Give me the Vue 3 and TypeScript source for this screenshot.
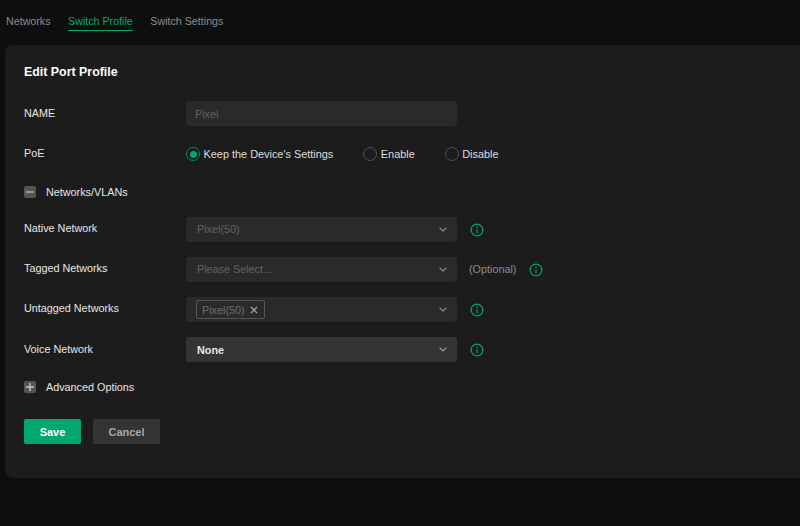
<script setup lang="ts">
const poe = [
  { label: "Keep the Device's Settings", on: true },
  { label: 'Enable', on: false },
  { label: 'Disable', on: false },
]
</script>

<template>
  <div class="page">
    <nav class="tabs">
      <span class="tab">Networks</span>
      <span class="tab active">Switch Profile</span>
      <span class="tab">Switch Settings</span>
    </nav>
    <section class="card">
      <h1 class="title">Edit Port Profile</h1>

      <div class="row name-row">
        <span class="label">NAME</span>
        <div class="field disabled name-field">Pixel</div>
      </div>

      <div class="row poe-row">
        <span class="label">PoE</span>
        <div class="radios">
          <span v-for="r in poe" :key="r.label" class="radio-item">
            <span class="radio" :class="{ on: r.on }"></span>
            <span>{{ r.label }}</span>
          </span>
        </div>
      </div>

      <div class="section nets-head">
        <span class="toggle">
          <svg width="12" height="12" viewBox="0 0 12 12"><path d="M2 6h8" stroke="#b4b4b4" stroke-width="1.4" /></svg>
        </span>
        <span>Networks/VLANs</span>
      </div>

      <div class="row net-row first">
        <span class="label">Native Network</span>
        <div class="field disabled select">
          <span class="val">Pixel(50)</span>
          <svg class="chev" width="8" height="5" viewBox="0 0 8 5"><path d="M.6.7L4 4l3.4-3.3" fill="none" stroke="#8a8a8a" stroke-width="1.2" /></svg>
        </div>
        <svg class="info" width="14" height="14" viewBox="0 0 14 14"><circle cx="7" cy="7" r="5.9" fill="none" stroke="#00a870" stroke-width="1.2" /><path d="M7 6.2v4M7 3.8v1.3" stroke="#00a870" stroke-width="1.2" /></svg>
      </div>

      <div class="row net-row">
        <span class="label">Tagged Networks</span>
        <div class="field disabled select">
          <span class="val">Please Select...</span>
          <svg class="chev" width="8" height="5" viewBox="0 0 8 5"><path d="M.6.7L4 4l3.4-3.3" fill="none" stroke="#8a8a8a" stroke-width="1.2" /></svg>
        </div>
        <span class="optional">(Optional)</span>
        <svg class="info" width="14" height="14" viewBox="0 0 14 14"><circle cx="7" cy="7" r="5.9" fill="none" stroke="#00a870" stroke-width="1.2" /><path d="M7 6.2v4M7 3.8v1.3" stroke="#00a870" stroke-width="1.2" /></svg>
      </div>

      <div class="row net-row">
        <span class="label">Untagged Networks</span>
        <div class="field disabled select tagged">
          <span class="tag">Pixel(50)
            <svg width="8" height="8" viewBox="0 0 8 8"><path d="M1 1l6 6M7 1L1 7" stroke="#b0b0b0" stroke-width="1.1" /></svg>
          </span>
          <svg class="chev" width="8" height="5" viewBox="0 0 8 5"><path d="M.6.7L4 4l3.4-3.3" fill="none" stroke="#8a8a8a" stroke-width="1.2" /></svg>
        </div>
        <svg class="info" width="14" height="14" viewBox="0 0 14 14"><circle cx="7" cy="7" r="5.9" fill="none" stroke="#00a870" stroke-width="1.2" /><path d="M7 6.2v4M7 3.8v1.3" stroke="#00a870" stroke-width="1.2" /></svg>
      </div>

      <div class="row net-row voice">
        <span class="label">Voice Network</span>
        <div class="field enabled select">
          <span>None</span>
          <svg class="chev" width="8" height="5" viewBox="0 0 8 5"><path d="M.6.7L4 4l3.4-3.3" fill="none" stroke="#9a9a9a" stroke-width="1.2" /></svg>
        </div>
        <svg class="info" width="14" height="14" viewBox="0 0 14 14"><circle cx="7" cy="7" r="5.9" fill="none" stroke="#00a870" stroke-width="1.2" /><path d="M7 6.2v4M7 3.8v1.3" stroke="#00a870" stroke-width="1.2" /></svg>
      </div>

      <div class="section adv-head">
        <span class="toggle">
          <svg width="12" height="12" viewBox="0 0 12 12"><path d="M2 6h8M6 2v8" stroke="#c4c4c4" stroke-width="1.4" /></svg>
        </span>
        <span>Advanced Options</span>
      </div>

      <div class="actions">
        <button class="btn save" type="button">Save</button>
        <button class="btn cancel" type="button">Cancel</button>
      </div>
    </section>
  </div>
</template>

<style>
html, body { margin: 0; background: #0e0e0e; }
</style>

<style scoped>
.page {
  width: 800px;
  height: 526px;
  overflow: hidden;
  background: #0e0e0e;
  font-family: "Liberation Sans", Arial, sans-serif;
  font-size: 10.8px;
  color: #e6e6e6;
  box-sizing: border-box;
  padding-left: 5px;
}
.tabs {
  display: flex;
  gap: 17.5px;
  height: 45px;
  padding: 14px 0 0 1px;
  box-sizing: border-box;
  font-size: 10.7px;
}
.tab {
  color: #8c8c8c;
  height: 16px;
  line-height: 14px;
}
.tab.active {
  color: #00a870;
  border-bottom: 1px solid #00a870;
}
.card {
  width: 830px;
  height: 433px;
  background: #1c1c1c;
  border-radius: 8px;
  box-sizing: border-box;
  padding: 19px 0 0 19px;
}
.title {
  margin: 0;
  font-size: 12.4px;
  font-weight: 700;
  line-height: 16px;
  color: #fff;
}
.row {
  display: flex;
  align-items: center;
}
.label {
  width: 162px;
  flex: none;
  position: relative;
  top: -1px;
  color: #e6e6e6;
}
.net-row .label { top: -2px; }
.net-row.voice .label { top: -1px; }
.name-row { margin-top: 21px; }
.poe-row { margin-top: 18px; height: 20px; }
.field {
  width: 271px;
  height: 25px;
  flex: none;
  box-sizing: border-box;
  padding: 0 10px 0 11px;
  border-radius: 3px;
  display: flex;
  align-items: center;
  justify-content: space-between;
}
.name-field { padding-left: 9px; }
.field.disabled { background: #2a2a2a; color: #626262; }
.field.enabled { background: #343434; color: #e8e8e8; font-weight: 700; }
.val { position: relative; top: -1px; }
.tagged { padding-left: 10px; }
.tag {
  display: inline-flex;
  align-items: center;
  gap: 5px;
  height: 19px;
  padding: 0 6px 0 5px;
  box-sizing: border-box;
  border: 1px solid #565656;
  border-radius: 2px;
  color: #6e6e6e;
}
.radios { display: flex; align-items: center; font-size: 10.9px; }
.radio-item { display: inline-flex; align-items: center; gap: 3.5px; margin-right: 30px; color: #dedede; }
.radio {
  width: 14px;
  height: 14px;
  border: 1px solid #505050;
  border-radius: 50%;
  box-sizing: border-box;
  display: inline-block;
  position: relative;
}
.radio.on { border-color: #0b8a60; }
.radio.on::after {
  content: "";
  position: absolute;
  left: 2.5px;
  top: 2.5px;
  width: 7px;
  height: 7px;
  border-radius: 50%;
  background: #00a870;
}
.section {
  display: flex;
  align-items: center;
  gap: 10px;
  color: #e6e6e6;
}
.nets-head { margin-top: 21px; height: 14px; }
.toggle {
  width: 12px;
  height: 12px;
  border-radius: 2px;
  background: #555;
  display: inline-flex;
}
.net-row { margin-top: 15px; height: 25px; }
.net-row.first { margin-top: 18px; }
.info { margin-left: 13px; }
.optional { margin-left: 12px; color: #8c8c8c; position: relative; top: -1px; }
.adv-head { margin-top: 18px; height: 14px; }
.actions { display: flex; gap: 12px; margin-top: 25px; }
.btn {
  height: 25px;
  border: none;
  border-radius: 2px;
  font-family: inherit;
  font-size: 11px;
  font-weight: 700;
  padding: 0;
}
.save { width: 57px; background: #00a870; color: #fff; }
.cancel { width: 67px; background: #343434; color: #a8a8a8; }
</style>
